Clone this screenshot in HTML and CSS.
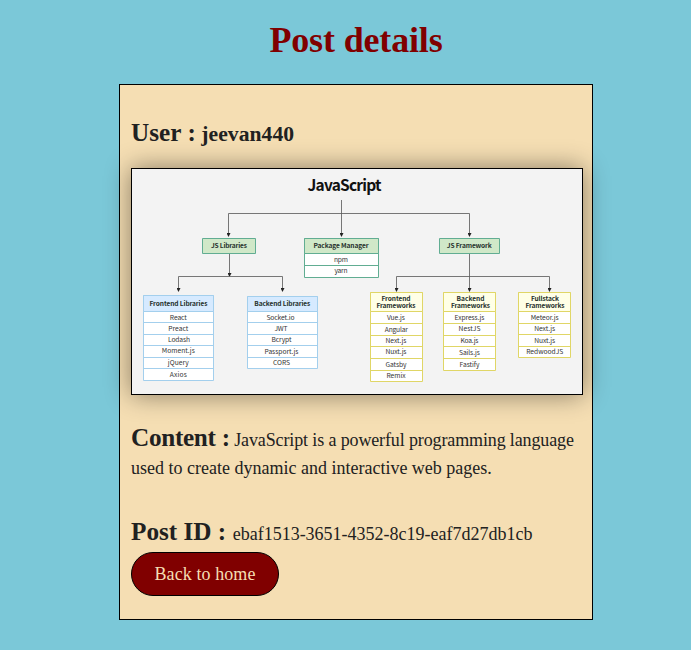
FILE: index.html
```
<!DOCTYPE html>
<html lang="en">
<head>
<meta charset="utf-8">
<title>Post details</title>
<link rel="stylesheet" href="styles.css">
</head>
<body>
<main class="page">
<h1 class="title">Post details</h1>
<article class="card">
<h2 class="user"><span class="label">User :</span> jeevan440</h2>
<svg class="diagram" viewBox="132 169 450 225" role="img" aria-label="JavaScript ecosystem">
<defs><marker id="arrow" viewBox="0 0 4 4" refX="2" refY="3" markerWidth="4" markerHeight="4" markerUnits="userSpaceOnUse"><path d="M0 0H4L2 4Z" fill="#222"/></marker></defs>
<text class="heading" x="344.5" y="191" textLength="74">JavaScript</text>
<g class="lines">
<path d="M341.5 200V236"/><path d="M341.5 213.5H228.5V236"/><path d="M341.5 213.5H469.5V236"/>
<path d="M229.5 254V276"/><path d="M229.5 276.5H178.5V291"/><path d="M229.5 276.5H282.5V291"/>
<path d="M469.5 254V291"/><path d="M469.5 276.5H396.5V291"/><path d="M469.5 276.5H549.5V291"/>
</g>
<g class="green">
<path class="head" d="M202.5 238.5h53v15h-53z"/><text class="strong" x="229" y="248.3" textLength="36">JS Libraries</text>
<path class="body" d="M304.5 238.5h74v39h-74z"/><path class="head" d="M304.5 238.5h74v15h-74z"/><path d="M304.5 265.5h74"/>
<text class="strong" x="341" y="248.3" textLength="55">Package Manager</text><text x="341" y="261.7" textLength="14">npm</text><text x="341" y="273" textLength="13">yarn</text>
<path class="head" d="M439.5 238.5h60v15h-60z"/><text class="strong" x="469.3" y="248.3" textLength="45">JS Framework</text>
</g>
<g class="blue">
<path class="body" d="M143.5 295.5h70v85h-70z"/><path class="head" d="M143.5 295.5h70v16h-70z"/><path d="M143.5 322.5h70M143.5 334.5h70M143.5 345.5h70M143.5 357.5h70M143.5 368.5h70"/>
<text class="strong" x="178.5" y="306.3" textLength="58">Frontend Libraries</text>
<text x="178.3" y="319.5" textLength="17">React</text><text x="178.3" y="330.8" textLength="20">Preact</text><text x="179" y="342.2" textLength="22">Lodash</text><text x="178.3" y="353.4" textLength="33">Moment.js</text><text x="178.3" y="365.2" textLength="21">jQuery</text><text x="178.3" y="376.8" textLength="17">Axios</text>
<path class="body" d="M247.5 296.5h70v72h-70z"/><path class="head" d="M247.5 296.5h70v15h-70z"/><path d="M247.5 322.5h70M247.5 334.5h70M247.5 345.5h70M247.5 357.5h70"/>
<text class="strong" x="282.3" y="306.3" textLength="56">Backend Libraries</text>
<text x="280.5" y="319.5" textLength="28">Socket.io</text><text x="281" y="330.8" textLength="13">JWT</text><text x="281.5" y="342.2" textLength="20">Bcrypt</text><text x="281.5" y="353.9" textLength="34">Passport.js</text><text x="281.5" y="365.4" textLength="17">CORS</text>
</g>
<g class="yellow">
<path class="body" d="M370.5 292.5h52v89h-52z"/><path class="head" d="M370.5 292.5h52v19h-52z"/><path d="M370.5 323.5h52M370.5 335.5h52M370.5 346.5h52M370.5 358.5h52M370.5 370.5h52"/>
<text class="strong" x="396" y="300.8" textLength="29">Frontend</text><text class="strong" x="396" y="308.2" textLength="39">Frameworks</text>
<text x="396" y="319.5" textLength="18">Vue.js</text><text x="396.3" y="331.7" textLength="23">Angular</text><text x="396" y="343.3" textLength="21">Next.js</text><text x="396" y="354.4" textLength="21">Nuxt.js</text><text x="396" y="367" textLength="21">Gatsby</text><text x="396" y="378" textLength="19">Remix</text>
<path class="body" d="M443.5 292.5h52v78h-52z"/><path class="head" d="M443.5 292.5h52v19h-52z"/><path d="M443.5 323.5h52M443.5 335.5h52M443.5 346.5h52M443.5 358.5h52"/>
<text class="strong" x="470.5" y="300.8" textLength="28">Backend</text><text class="strong" x="470.5" y="308.2" textLength="39">Frameworks</text>
<text x="469.5" y="319.5" textLength="30">Express.js</text><text x="469.5" y="331.3" textLength="22">NestJS</text><text x="469.5" y="343.2" textLength="18">Koa.js</text><text x="469.5" y="354.9" textLength="21">Sails.js</text><text x="469.5" y="366.7" textLength="20">Fastify</text>
<path class="body" d="M518.5 292.5h52v65h-52z"/><path class="head" d="M518.5 292.5h52v19h-52z"/><path d="M518.5 323.5h52M518.5 334.5h52M518.5 346.5h52"/>
<text class="strong" x="545" y="300.8" textLength="28">Fullstack</text><text class="strong" x="545" y="308.2" textLength="39">Frameworks</text>
<text x="544.7" y="319.5" textLength="28">Meteor.js</text><text x="544.7" y="331.2" textLength="21">Next.js</text><text x="544.7" y="342.6" textLength="21">Nuxt.js</text><text x="544.7" y="354.2" textLength="37">RedwoodJS</text>
</g>
</svg>
<p class="content"><span class="label">Content :</span> <span class="lead">JavaScript is a powerful programming language</span> used to create dynamic and interactive web pages.</p>
<p class="post-id"><span class="label">Post ID :</span> ebaf1513-3651-4352-8c19-eaf7d27db1cb</p>
<a class="button" href="#">Back to home</a>
</article>
</main>
</body>
</html>
```
FILE: styles.css
```
* { box-sizing: border-box; }
body {
  margin: 0;
  min-height: 650px;
  background: #7bc8d8;
  color: #212121;
  font: 18px/28px "Liberation Serif", "Times New Roman", serif;
}
.page { width: 474px; margin-left: 119px; padding-top: 20px; }
.title {
  margin: 0 0 24px;
  color: maroon;
  font-size: 36px;
  line-height: 40px;
  letter-spacing: -.15px;
  text-align: center;
}
.card {
  height: 536px;
  padding: 34px 9px 0 11px;
  border: 1px solid #000;
  background: #f5deb3;
}
.user { margin: 0; height: 49px; font-size: 21.6px; line-height: 28px; letter-spacing: .05px; }
.label { font-size: 25.2px; font-weight: bold; }
.diagram {
  display: block;
  width: 452px;
  height: 227px;
  border: 1px solid #000;
  background: #f3f3f3;
  box-shadow: 0 0 24px rgba(0, 0, 0, .45);
  font: 6.7px "Noto Sans CJK SC", "Noto Sans", sans-serif;
}
.diagram text { fill: #333; stroke: none; text-anchor: middle; }
.diagram .heading { font-size: 15.5px; font-weight: bold; fill: #111; }
.diagram .strong { font-size: 6.6px; font-weight: bold; fill: #26312c; }
.lines path { fill: none; stroke: #555; stroke-width: .8; marker-end: url(#arrow); }
.lines path:nth-child(4) { marker-end: url(#arrow); }
.green { stroke: #61ad92; }
.blue { stroke: #a3cfed; }
.yellow { stroke: #e0d666; }
.body { fill: #fff; }
.green .head { fill: #d0e8c8; }
.blue .head { fill: #d6eaff; }
.yellow .head { fill: #ffffe6; }
.content { margin: 0; padding-top: 29px; }
.content .label { letter-spacing: -.3px; }
.lead { letter-spacing: -.13px; }
.post-id { margin: 0; padding-top: 36px; }
.post-id .label { margin-right: 2px; }
.button {
  display: flex;
  align-items: center;
  justify-content: center;
  width: 148px;
  height: 44px;
  margin-top: 4px;
  border: 1px solid #000;
  border-radius: 22px;
  background: maroon;
  color: #f5deb3;
  letter-spacing: .08px;
  text-decoration: none;
}
```
